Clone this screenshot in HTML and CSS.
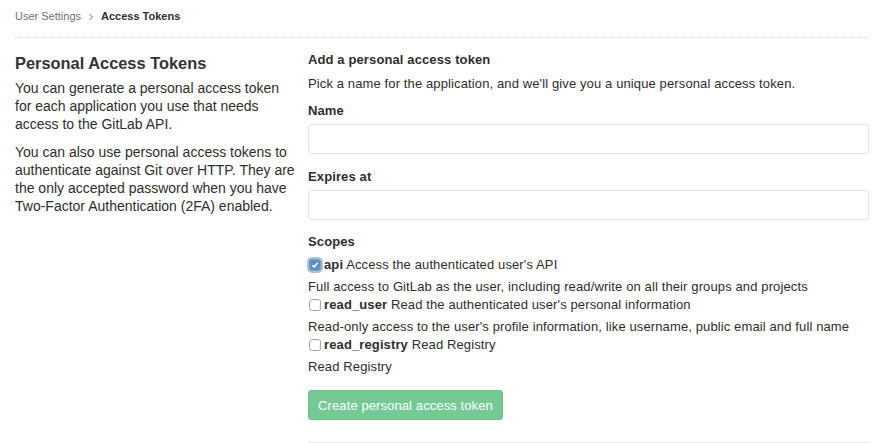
FILE: index.html
```html
<!DOCTYPE html>
<html>
<head>
<meta charset="utf-8">
<link rel="stylesheet" href="styles.css">
</head>
<body>
<div class="page">
  <nav class="breadcrumb">
    <span class="crumb">User Settings</span>
    <svg class="chev" width="6" height="8" viewBox="0 0 6 8"><path d="M1.5 1 L4.5 4 L1.5 7" fill="none" stroke="#aaa" stroke-width="1.1"/></svg>
    <span class="crumb-current">Access Tokens</span>
  </nav>
  <div class="row">
    <div class="side">
      <h4 class="side-title">Personal Access Tokens</h4>
      <p>You can generate a personal access token for each application you use that needs access to the GitLab API.</p>
      <p>You can also use personal access tokens to authenticate against Git over HTTP. They are the only accepted password when you have Two-Factor Authentication (2FA) enabled.</p>
    </div>
    <div class="main">
      <h5 class="form-title">Add a personal access token</h5>
      <p class="lead">Pick a name for the application, and we'll give you a unique personal access token.</p>
      <label class="field-label">Name</label>
      <div class="input"></div>
      <label class="field-label expires">Expires at</label>
      <div class="input"></div>
      <label class="field-label scopes">Scopes</label>
      <div class="scope first">
        <div class="scope-row"><span class="cb checked"><svg width="8" height="8" viewBox="0 0 8 8"><path d="M1.3 4.2 L3.2 6 L6.7 1.8" fill="none" stroke="#fff" stroke-width="1.5"/></svg></span><b>api</b> Access the authenticated user's API</div>
        <div class="help">Full access to GitLab as the user, including read/write on all their groups and projects</div>
      </div>
      <div class="scope">
        <div class="scope-row"><span class="cb"></span><b>read_user</b> Read the authenticated user's personal information</div>
        <div class="help">Read-only access to the user's profile information, like username, public email and full name</div>
      </div>
      <div class="scope">
        <div class="scope-row"><span class="cb"></span><b>read_registry</b> Read Registry</div>
        <div class="help">Read Registry</div>
      </div>
      <button class="btn">Create personal access token</button>
      <div class="divider"></div>
    </div>
  </div>
</div>
</body>
</html>
```

FILE: styles.css
```css
* { box-sizing: border-box; }
html, body { margin: 0; padding: 0; background: #fff; }
body {
  font-family: "Liberation Sans", Arial, sans-serif;
  font-size: 13px;
  line-height: 18px;
  color: #2e2e2e;
}
.page { padding: 0 11px 0 15px; }
.breadcrumb {
  display: flex;
  align-items: center;
  gap: 7px;
  font-size: 11px;
  line-height: 16px;
  padding-top: 8px;
  padding-bottom: 13px;
  border-bottom: 1px dotted #d8d8d8;
}
.crumb { color: #707070; }
.chev { margin-top: 1px; }
.crumb-current { font-weight: bold; color: #2e2e2e; }
.row {
  display: grid;
  grid-template-columns: 280px 1fr;
  column-gap: 13px;
}
.side { font-size: 14px; }
.side-title {
  margin: 14px 0 0;
  font-size: 16.4px;
  line-height: 22px;
  font-weight: bold;
  color: #333;
}
.side p { margin: 5px 0 0; }
.side p + p { margin-top: 10px; }
.main { letter-spacing: 0.12px; }
.form-title {
  margin: 13px 0 0;
  font-size: 13px;
  line-height: 18px;
  font-weight: bold;
}
.lead { margin: 6px 0 0; }
.field-label {
  display: block;
  font-weight: bold;
  margin-top: 9px;
}
.field-label.expires { margin-top: 14px; }
.field-label.scopes { margin-top: 13px; }
.input {
  margin-top: 4px;
  height: 30px;
  border: 1px solid #e5e5e5;
  border-radius: 3px;
  background: #fff;
}
.scope.first { margin-top: 5px; }
.scope-row {
  display: flex;
  align-items: center;
  white-space: pre;
}
.scope-row b { font-weight: bold; }
.cb {
  display: inline-flex;
  align-items: center;
  justify-content: center;
  width: 12px;
  height: 12px;
  margin: 0 3px 0 1px;
  border: 1px solid #a8a8a8;
  border-radius: 3px;
  background: #fff;
  flex: none;
}
.cb.checked {
  background: #5b8fc7;
  border-color: #7f9cbd;
  box-shadow: 0 0 0 2px #aebfd3;
}
.help { margin-top: 4px; }
.btn {
  display: block;
  margin-top: 14px;
  height: 30px;
  width: 195px;
  padding: 0;
  border: 1px solid #6ec48b;
  border-radius: 3px;
  background: #75c994;
  color: #fff;
  font-family: "Liberation Sans", Arial, sans-serif;
  font-size: 13px;
  font-weight: 500;
  letter-spacing: 0.1px;
}
.divider {
  margin-top: 22px;
  border-top: 1px solid #e5e5e5;
}
```
